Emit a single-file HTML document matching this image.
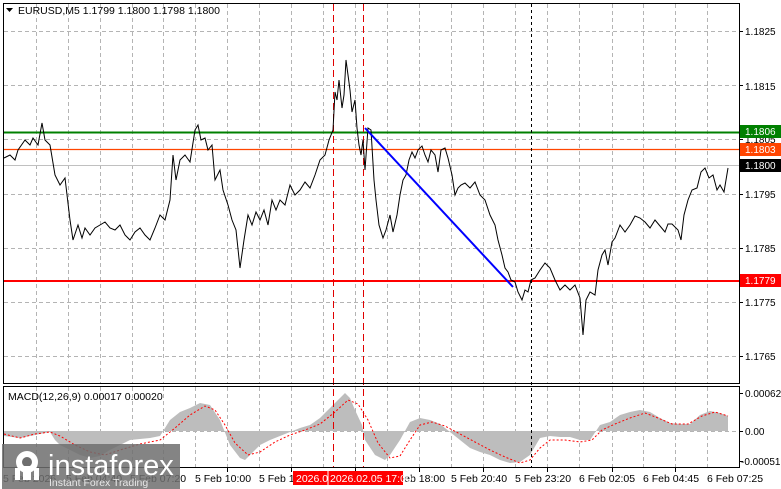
<!DOCTYPE html>
<html><head><meta charset="utf-8"><style>
html,body{margin:0;padding:0;background:#fff;}
body{width:781px;height:489px;overflow:hidden;position:relative;font-family:"Liberation Sans",sans-serif;}
svg{position:absolute;left:0;top:0;}
text{font-family:"Liberation Sans",sans-serif;font-size:10.5px;fill:#000;}
</style></head><body>
<svg width="781" height="489" viewBox="0 0 781 489">
<rect width="781" height="489" fill="#fff"/>
<g stroke="#b4b4b4" stroke-dasharray="4,3" stroke-width="1">
<path d="M36.5 4V383M68.5 4V383M100.5 4V383M132.5 4V383M163.5 4V383M195.5 4V383M227.5 4V383M259.5 4V383M291.5 4V383M323.5 4V383M355.5 4V383M387.5 4V383M419.5 4V383M451.5 4V383M483.5 4V383M515.5 4V383M547.5 4V383M579.5 4V383M612.5 4V383M643.5 4V383M675.5 4V383M707.5 4V383"/>
<path d="M36.5 387V467M68.5 387V467M100.5 387V467M132.5 387V467M163.5 387V467M195.5 387V467M227.5 387V467M259.5 387V467M291.5 387V467M323.5 387V467M355.5 387V467M387.5 387V467M419.5 387V467M451.5 387V467M483.5 387V467M515.5 387V467M547.5 387V467M579.5 387V467M612.5 387V467M643.5 387V467M675.5 387V467M707.5 387V467"/>
<path d="M4 31.5H739M4 85.5H739M4 139.5H739M4 194.5H739M4 248.5H739M4 302.5H739M4 356.5H739"/>
<path d="M4 431.5H739"/>
</g>
<polygon fill="#bdbdbd" points="4,431 4,436 20,438 40,434 50,432 55,440 60,445 70,450 80,455 90,458 100,456 110,450 120,445 130,440 150,438 160,436 170,420 180,412 190,408 200,403 210,405 220,420 230,445 240,458 245,460 250,455 260,445 270,440 280,436 290,432 300,428 310,425 320,418 330,408 340,398 345,393 350,398 355,410 362,425 365,440 375,455 385,460 390,455 400,440 410,422 420,418 430,420 440,424 450,432 460,440 470,448 480,452 490,455 500,460 510,463 520,462 530,455 540,438 550,436 560,437 570,437 580,440 590,440 600,425 610,422 620,415 630,412 640,410 650,412 660,418 670,423 680,424 690,424 700,415 710,411 720,413 728,416 728,431"/>
<polyline fill="none" stroke="#f00" stroke-dasharray="2,2" stroke-width="1" points="4,434 20,438 35,434 50,432 60,436 75,445 90,452 105,455 120,450 140,444 160,440 175,428 190,415 205,406 215,410 225,425 235,443 248,455 260,452 275,442 290,435 305,430 320,424 335,412 348,400 358,404 368,420 378,443 390,458 400,456 410,440 420,425 432,422 445,426 460,434 475,442 490,450 505,457 520,463 530,460 540,448 550,440 565,440 580,442 592,440 602,430 615,424 630,418 645,413 658,418 672,424 688,424 702,416 715,412 728,416"/>
<line x1="4" y1="132.5" x2="739" y2="132.5" stroke="#008000" stroke-width="2"/>
<line x1="4" y1="149.5" x2="739" y2="149.5" stroke="#ff4500" stroke-width="1.3"/>
<line x1="4" y1="165.5" x2="739" y2="165.5" stroke="#c0c0c0" stroke-width="1"/>
<line x1="4" y1="281" x2="739" y2="281" stroke="#f00" stroke-width="2"/>
<g stroke-dasharray="7,4" stroke-width="1">
<path d="M333.5 4V467M363.5 4V467" stroke="#e00000"/>
<path d="M531.5 4V467" stroke="#000" stroke-dasharray="3,3"/>
</g>
<polyline fill="none" stroke="#000" stroke-width="1" points="4,158 10,155 15,160 18,150 25,140 30,145 33,138 38,145 42,123 45,140 50,145 55,175 60,185 65,178 70,220 73,240 78,225 82,238 85,228 90,235 95,228 100,225 105,222 110,228 115,230 120,225 125,235 130,240 135,232 140,228 145,235 150,240 155,228 160,215 165,220 170,200 173,155 176,180 180,160 185,155 190,162 195,130 198,125 201,140 205,138 208,150 212,145 215,180 220,170 223,190 228,205 232,220 236,230 240,268 244,240 248,215 252,225 256,212 260,220 264,210 268,225 272,200 276,210 280,200 285,205 290,185 295,195 300,190 305,182 310,188 315,175 320,160 325,155 329,140 333,130 335,92 337,100 339,80 342,108 344,95 346,60 348,75 350,90 352,112 355,100 357,128 359,145 361,155 363,140 365,170 368,128 371,130 374,180 376,200 379,225 383,238 386,230 390,215 393,232 397,215 400,195 403,180 406,175 409,160 412,152 415,158 418,150 422,146 425,155 428,162 431,150 435,155 438,172 441,150 445,148 448,158 452,175 455,195 458,188 461,185 465,183 470,188 475,182 480,195 485,200 490,215 495,225 498,240 502,255 505,268 508,272 511,280 515,282 518,292 522,300 525,290 528,292 531,280 535,278 540,270 545,263 550,268 555,280 560,290 565,285 570,290 575,285 580,298 583,335 586,300 590,292 595,295 598,270 602,255 605,250 608,265 612,242 615,238 620,225 625,232 630,225 635,216 640,218 645,222 650,228 655,220 660,226 665,232 668,224 672,224 678,230 681,240 684,215 688,200 692,190 697,188 701,172 705,168 709,178 713,175 717,190 720,185 724,192 728,168"/>
<line x1="365" y1="128" x2="513" y2="287" stroke="#0000ff" stroke-width="2"/>
<g stroke="#000" stroke-width="1" fill="none">
<rect x="3.5" y="3.5" width="736" height="380"/>
<rect x="3.5" y="386.5" width="736" height="81"/>
</g>
<g stroke="#000"><path d="M739 31.5h4M739 85.5h4M739 139.5h4M739 194.5h4M739 248.5h4M739 302.5h4M739 356.5h4M739 393.5h4M739 431.5h4M739 461.5h4"/>
<path d="M36.5 468v4M100.5 468v4M163.5 468v4M227.5 468v4M291.5 468v4M355.5 468v4M419.5 468v4M483.5 468v4M547.5 468v4M612.5 468v4M675.5 468v4"/></g>
<g style="font-size:10px">
<text x="745" y="35" style="font-size:10px">1.1825</text>
<text x="745" y="90" style="font-size:10px">1.1815</text>
<text x="745" y="143" style="font-size:10px">1.1805</text>
<text x="745" y="198" style="font-size:10px">1.1795</text>
<text x="745" y="252" style="font-size:10px">1.1785</text>
<text x="745" y="306" style="font-size:10px">1.1775</text>
<text x="745" y="360" style="font-size:10px">1.1765</text>
<rect x="740" y="125" width="41" height="13" fill="#008000"/><text x="745" y="135" style="fill:#fff;font-size:10px">1.1806</text>
<rect x="740" y="143" width="41" height="13" fill="#ff4500"/><text x="745" y="153" style="fill:#fff;font-size:10px">1.1803</text>
<rect x="740" y="159" width="41" height="13" fill="#000"/><text x="745" y="169" style="fill:#fff;font-size:10px">1.1800</text>
<rect x="740" y="274" width="41" height="13" fill="#f00"/><text x="745" y="284" style="fill:#fff;font-size:10px">1.1779</text>
<text x="745" y="397" style="font-size:10px">0.00062</text>
<text x="745" y="435" style="font-size:10px">0.00</text>
<text x="741" y="465" style="font-size:10px">-0.00051</text>
</g>
<text x="3" y="482">5 Feb 2026</text>
<text x="66" y="482">5 Feb 04:40</text>
<text x="130" y="482">5 Feb 07:20</text>
<text x="195" y="482">5 Feb 10:00</text>
<text x="259" y="482">5 Feb 12:40</text>
<text x="389" y="482">5 Feb 18:00</text>
<text x="451" y="482">5 Feb 20:40</text>
<text x="515" y="482">5 Feb 23:20</text>
<text x="579" y="482">6 Feb 02:05</text>
<text x="643" y="482">6 Feb 04:45</text>
<text x="707" y="482">6 Feb 07:25</text>
<rect x="293" y="471" width="110" height="14" fill="#f00"/>
<text x="296" y="482" style="fill:#fff">2026.0</text>
<line x1="328" y1="471" x2="328" y2="485" stroke="#fff"/>
<text x="330" y="482" style="fill:#fff">2026.02.05 17:00</text>
<path d="M6 8h7l-3.5 4z" fill="#000"/>
<text x="18" y="14">EURUSD,M5  1.1799 1.1800 1.1798 1.1800</text>
<text x="8" y="400">MACD(12,26,9) 0.00017 0.00020</text>
<rect x="2" y="444" width="178" height="45" fill="#6e6e6e" fill-opacity="0.85"/>
<g fill="#fff">
<circle cx="27" cy="462" r="11"/>
<circle cx="27" cy="462" r="5" fill="#6e6e6e"/>
<rect x="23" y="466" width="8" height="14" fill="#fff"/>
<rect x="15" y="468" width="5" height="12"/>
<rect x="34" y="468" width="5" height="12"/>
</g>
<text x="48" y="475" style="fill:#fff;font-size:29px;">instaforex</text>
<text x="49" y="486" style="fill:#e8e8e8;font-size:10.5px;">Instant Forex Trading</text>
</svg>
</body></html>
